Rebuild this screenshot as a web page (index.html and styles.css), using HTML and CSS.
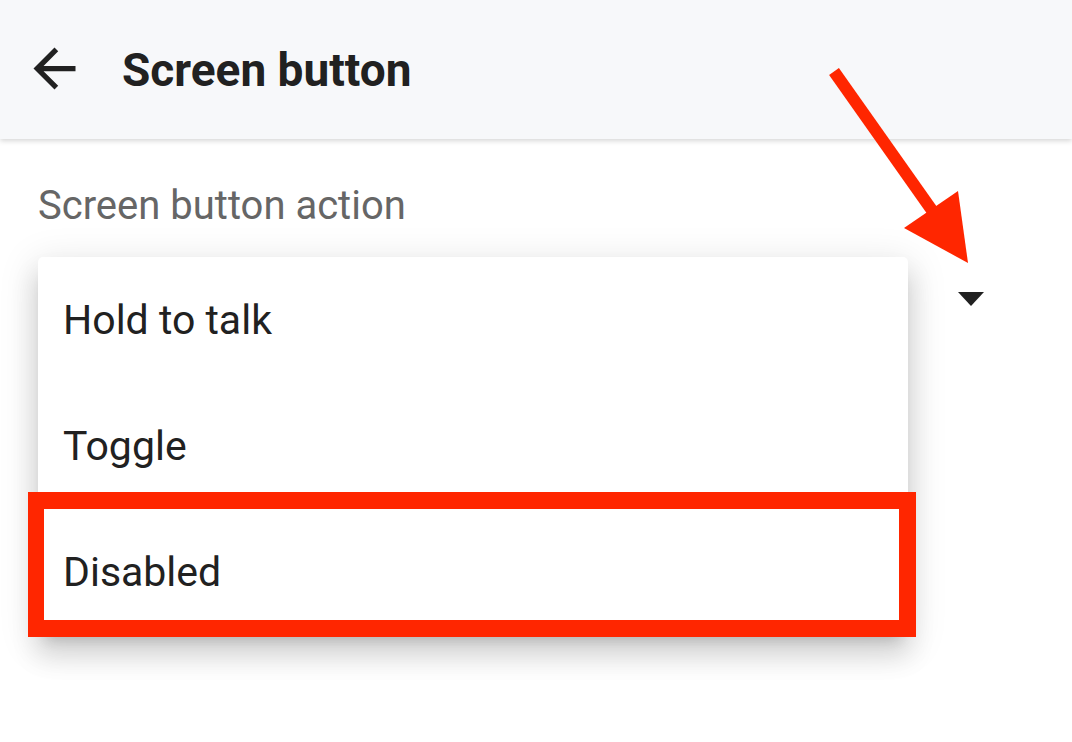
FILE: index.html
```html
<!DOCTYPE html>
<html lang="en">
<head>
<meta charset="utf-8">
<title>Screen button</title>
<link rel="stylesheet" href="styles.css">
</head>
<body>
<div class="screen">
  <header class="appbar">
    <svg class="back" viewBox="0 0 24 24" aria-hidden="true"><path d="M20 11H7.83l5.59-5.59L12 4l-8 8 8 8 1.41-1.41L7.83 13H20v-2z"/></svg>
    <h1 class="title">Screen button</h1>
  </header>
  <main class="content">
    <div class="label">Screen button action</div>
    <div class="spinner">
      <svg class="caret" viewBox="0 0 26 14" aria-hidden="true"><path d="M0 0h26L13 14z"/></svg>
    </div>
    <ul class="menu">
      <li class="item">Hold to talk</li>
      <li class="item">Toggle</li>
      <li class="item">Disabled</li>
    </ul>
    <div class="highlight"></div>
  </main>
  <svg class="pointer" viewBox="0 0 1072 742" aria-hidden="true">
    <line x1="834" y1="71.5" x2="936" y2="216" class="shaft"/>
    <polygon points="904,228 958,191 968,263" class="head"/>
  </svg>
</div>
</body>
</html>
```
FILE: styles.css
```css
html, body {
  margin: 0;
  padding: 0;
  background: #ffffff;
}

body {
  font-family: Roboto, "Noto Sans", "Liberation Sans", sans-serif;
  color: #212121;
}

.screen {
  position: relative;
  width: 1072px;
  height: 742px;
  overflow: hidden;
}

.appbar {
  height: 139px;
  background: #f7f8fa;
  display: flex;
  align-items: center;
  padding-left: 23px;
  box-shadow: 0 2px 5px rgba(0, 0, 0, 0.16);
  position: relative;
  z-index: 1;
}

.back {
  width: 63px;
  height: 63px;
  fill: #212121;
  flex: none;
  margin-top: -3px;
}

.title {
  margin: 0 0 0 36px;
  font-size: 46px;
  font-weight: 700;
  color: #212121;
  line-height: 1;
}

.content {
  position: relative;
  padding-top: 42px;
}

.label {
  padding-left: 38px;
  font-size: 40px;
  color: #666666;
  line-height: 49px;
}

.spinner {
  display: flex;
  justify-content: flex-end;
  padding: 62px 88px 0 0;
}

.caret {
  width: 26px;
  height: 14px;
  fill: #212121;
}

.menu {
  position: absolute;
  left: 38px;
  top: 118px;
  width: 870px;
  margin: 0;
  padding: 0;
  list-style: none;
  background: #ffffff;
  border-radius: 5px;
  box-shadow: 0 12px 12px -8px rgba(0, 0, 0, 0.16),
              0 20px 26px 3px rgba(0, 0, 0, 0.11),
              0 8px 37px 5px rgba(0, 0, 0, 0.10);
}

.item {
  height: 126px;
  display: flex;
  align-items: center;
  padding-left: 25px;
  font-size: 41px;
  color: #212121;
}

.highlight {
  position: absolute;
  left: 28px;
  top: 353px;
  width: 888px;
  height: 145px;
  box-sizing: border-box;
  border-style: solid;
  border-color: #ff2600;
  border-width: 17px 17px 17px 16px;
}

.pointer {
  position: absolute;
  left: 0;
  top: 0;
  width: 1072px;
  height: 742px;
  z-index: 2;
  pointer-events: none;
}

.shaft {
  stroke: #ff2600;
  stroke-width: 12;
}

.head {
  fill: #ff2600;
}
```
